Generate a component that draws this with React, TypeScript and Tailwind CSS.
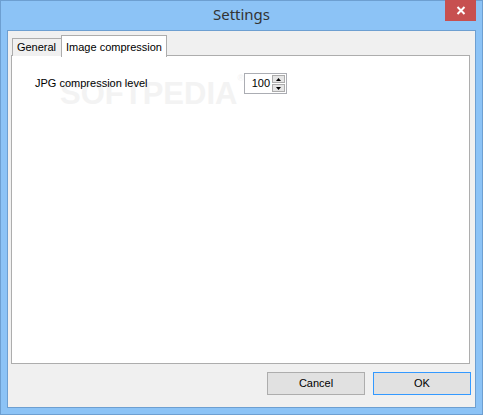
import React from "react";

export default function App() {
  const ui = { fontFamily: '"Liberation Sans", Arial, sans-serif' };
  return (
    <div className="w-[483px] h-[415px] bg-[#8cc3f6] border border-[#6d9fd1] flex flex-col px-[6px] pb-[6px]" style={ui}>
      {/* Title bar */}
      <div className="h-[29px] flex relative items-center justify-center shrink-0">
        <span className="text-[15px] text-[#333333] leading-none mb-[2px]" style={{ fontFamily: '"Noto Sans", "Open Sans", sans-serif' }}>Settings</span>
        <div className="absolute right-[0px] top-[-1px] w-[31px] h-[21px] bg-[#c75050] flex items-center justify-center">
          <svg width="10" height="9" viewBox="0 0 10 9">
            <path d="M1.5 1 L8.5 8 M8.5 1 L1.5 8" stroke="#fff" strokeWidth="2" />
          </svg>
        </div>
      </div>
      {/* Client */}
      <div className="flex-1 border border-[#6d9fd1] bg-[#f0f0f0] flex flex-col">
        <div className="pl-[3px] pr-[5px] pt-[3px] flex flex-col">
          {/* tabs row */}
          <div className="flex items-end h-[21px] pl-[1px] relative z-10">
            <div className="h-[18px] w-[50px] border border-b-0 border-[#adadad] bg-[#f0f0f0] text-[11px] text-black flex items-center justify-center mb-[-1px] pr-[1px]">
              General
            </div>
            <div className="h-[22px] w-[106px] border border-b-0 border-[#adadad] bg-white text-[11px] text-black flex items-start justify-center pt-[3px] ml-[-1px] mb-[-2px]">
              Image compression
            </div>
          </div>
          {/* panel */}
          <div className="h-[309px] border border-[#adadad] bg-white relative">
            <div className="absolute left-[48px] top-[22px] text-[31px] font-bold text-[#f3f3f3] leading-none select-none">
              SOFTPEDIA<span className="text-[9px] align-top relative top-[-4px]">®</span>
            </div>
            <div className="relative flex items-center pl-[23px] pt-[17px]">
              <span className="w-[209px] text-[11px] text-black leading-none">JPG compression level</span>
              <div className="w-[43px] h-[21px] border border-[#abadb3] bg-white flex items-center">
                <span className="flex-1 text-right text-[11px] text-black pr-[2px] leading-none">100</span>
                <div className="w-[13px] h-[17px] flex flex-col gap-[1px] mr-[1px]">
                  <div className="flex-1 bg-[#e5e5e5] border border-[#acacac] flex items-center justify-center">
                    <svg width="5" height="3" viewBox="0 0 5 3"><path d="M0 3 L2.5 0 L5 3 Z" fill="#000" /></svg>
                  </div>
                  <div className="flex-1 bg-[#e5e5e5] border border-[#acacac] flex items-center justify-center">
                    <svg width="5" height="3" viewBox="0 0 5 3"><path d="M0 0 L2.5 3 L5 0 Z" fill="#000" /></svg>
                  </div>
                </div>
              </div>
            </div>
          </div>
        </div>
        {/* buttons */}
        <div className="flex justify-end gap-[8px] pr-[4px] pt-[8px]">
          <button className="w-[98px] h-[23px] bg-[#e1e1e1] border border-[#adadad] text-[11px] text-black" style={ui}>Cancel</button>
          <button className="w-[98px] h-[23px] bg-[#e1e1e1] border border-[#3399ff] text-[11px] text-black" style={ui}>OK</button>
        </div>
      </div>
    </div>
  );
}
